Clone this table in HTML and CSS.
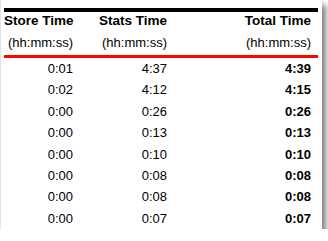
FILE: index.html
```html
<!DOCTYPE html>
<html>
<head>
<meta charset="utf-8">
<link rel="stylesheet" href="styles.css">
</head>
<body>
<div class="panel">
  <div class="bar-black"></div>
  <div class="row head">
    <div>Store Time</div><div>Stats Time</div><div>Total Time</div>
  </div>
  <div class="row sub">
    <div>(hh:mm:ss)</div><div>(hh:mm:ss)</div><div>(hh:mm:ss)</div>
  </div>
  <div class="bar-red"></div>
  <div class="row data"><div>0:01</div><div>4:37</div><div class="total">4:39</div></div>
  <div class="row data"><div>0:02</div><div>4:12</div><div class="total">4:15</div></div>
  <div class="row data"><div>0:00</div><div>0:26</div><div class="total">0:26</div></div>
  <div class="row data"><div>0:00</div><div>0:13</div><div class="total">0:13</div></div>
  <div class="row data"><div>0:00</div><div>0:10</div><div class="total">0:10</div></div>
  <div class="row data"><div>0:00</div><div>0:08</div><div class="total">0:08</div></div>
  <div class="row data"><div>0:00</div><div>0:08</div><div class="total">0:08</div></div>
  <div class="row data"><div>0:00</div><div>0:07</div><div class="total">0:07</div></div>
</div>
</body>
</html>
```
FILE: styles.css
```css
html, body {
  margin: 0;
  padding: 0;
  background: #ffffff;
}
body {
  font-family: "Liberation Sans", Arial, sans-serif;
  font-size: 13px;
  color: #000;
}
.panel {
  box-sizing: border-box;
  width: 322px;
  padding: 8px 4px 0 3px;
  background: #fff;
  border-left: 1px solid #e2e2e2;
  box-shadow: 4px 5px 6px rgba(0, 0, 0, 0.5);
}
.bar-black {
  height: 4px;
  background: #000;
}
.bar-red {
  height: 3px;
  background: #ff0000;
}
.row {
  display: grid;
  grid-template-columns: 69px 94px 1fr;
  padding-right: 7px;
  text-align: right;
  white-space: nowrap;
}
.head {
  font-weight: bold;
  font-size: 13.5px;
  line-height: 18px;
}
.sub {
  line-height: 25px;
}
.data {
  line-height: 21.4px;
}
.total {
  font-weight: bold;
}
```
